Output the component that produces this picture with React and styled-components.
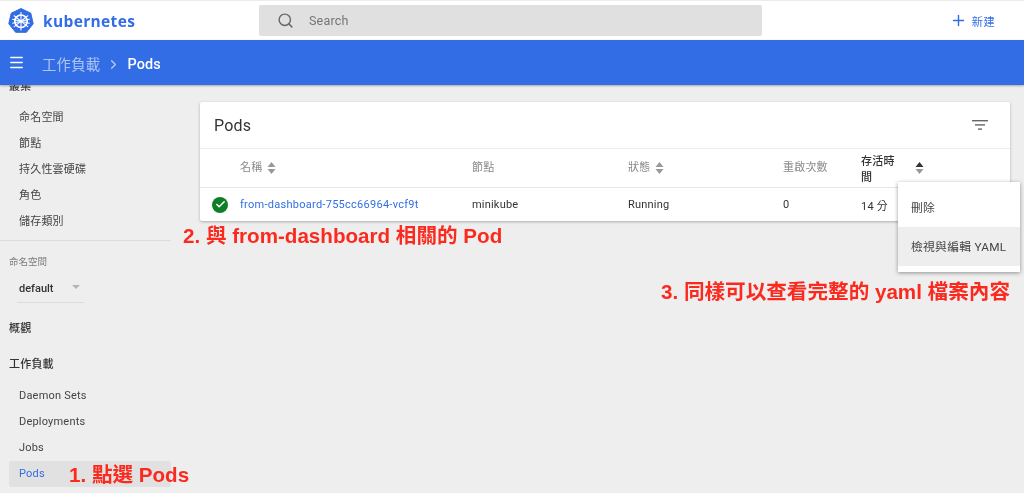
import React from "react";
import styled, { createGlobalStyle } from "styled-components";
import { Search, Plus, Menu, ChevronRight, Check } from "lucide-react";

const Global = createGlobalStyle`
  html, body { margin: 0; padding: 0; background: #eeeeee; }
  body { font-family: Roboto, "Noto Sans CJK TC", sans-serif; color: #333; -webkit-font-smoothing: antialiased; }
  * { box-sizing: border-box; }
`;

const Page = styled.div`
  position: relative;
  width: 1024px;
  height: 493px;
  overflow: hidden;
  background: #eeeeee;
  display: flex;
  flex-direction: column;
  filter: blur(0.3px);
`;

const TopBar = styled.header`
  height: 40px;
  flex: none;
  background: #fff;
  border-top: 1px solid #ececec;
  display: flex;
  align-items: center;
`;

const Brand = styled.div`
  width: 259px;
  display: flex;
  align-items: center;
  gap: 9px;
  padding-left: 8px;
  color: #326de6;
  font: 700 15.5px "Open Sans", sans-serif;
  letter-spacing: 0.35px;
`;

const SearchBox = styled.div`
  width: 503px;
  height: 31px;
  background: #e0e0e0;
  border-radius: 2px;
  display: flex;
  align-items: center;
  gap: 15px;
  padding-left: 18px;
  color: #757575;
  font-size: 12.5px;
  letter-spacing: 0.2px;
`;

const NewButton = styled.div`
  margin-left: auto;
  margin-right: 29px;
  display: flex;
  align-items: center;
  gap: 5px;
  color: #326de6;
  font-size: 11.2px;
  letter-spacing: 0.4px;
`;

const BlueBar = styled.div`
  height: 45px;
  flex: none;
  background: #326de6;
  box-shadow: 0 1px 2px rgba(0, 0, 0, 0.3);
  display: flex;
  align-items: center;
  padding-left: 8px;
  color: #fff;
  position: relative;
  z-index: 2;
`;

const Crumb = styled.span`
  font-size: 14.4px;
  font-weight: ${(p) => (p.$current ? 500 : 400)};
  color: ${(p) => (p.$current ? "#fff" : "rgba(255,255,255,0.6)")};
  letter-spacing: 0.2px;
  padding-top: ${(p) => (p.$current ? 3 : 1)}px;
`;

const CrumbSep = styled.span`
  display: flex;
  margin: 3px 6px 0 6px;
  color: rgba(255, 255, 255, 0.65);
`;

const Body = styled.div`
  flex: 1;
  display: flex;
  min-height: 0;
`;

const Sidebar = styled.nav`
  width: 171px;
  flex: none;
  font-size: 11px;
  overflow: hidden;
`;

const SectionTitle = styled.div`
  height: 26px;
  line-height: 26px;
  padding-left: 9px;
  color: #333;
  font-weight: 500;
  font-size: 11px;
  letter-spacing: 0.2px;
  margin-top: ${(p) => p.$mt || 0}px;
`;

const Item = styled.div`
  height: 26px;
  line-height: 26px;
  margin-left: 9px;
  padding-left: 10px;
  border-radius: 2px;
  font-size: 11px;
  letter-spacing: 0.2px;
  color: ${(p) => (p.$active ? "#326de6" : "#444")};
  background: ${(p) => (p.$active ? "#e1e1e1" : "transparent")};
`;

const Spacer = styled.div`
  height: ${(p) => p.$h}px;
`;

const Divider = styled.div`
  height: 1px;
  background: #dcdcdc;
  margin-top: 5px;
`;

const NsLabel = styled.div`
  margin: 15px 0 0 9px;
  height: 12px;
  line-height: 12px;
  font-size: 9.5px;
  color: #7d7d7d;
`;

const NsSelect = styled.div`
  margin: 10px 0 0 17px;
  width: 67px;
  height: 25px;
  border-bottom: 1px solid #dcdcdc;
  padding-left: 2px;
  padding-top: 3px;
  display: flex;
  justify-content: space-between;
  align-items: flex-start;
  padding-right: 4px;
  font-size: 11px;
  font-weight: 500;
  color: #333;
  line-height: 16px;
`;

const Caret = styled.span`
  margin-top: 4px;
  border-left: 4px solid transparent;
  border-right: 4px solid transparent;
  border-top: 4px solid #b5b5b5;
`;

const Main = styled.main`
  flex: 1;
  padding: 17px 14px 0 29px;
`;

const Card = styled.section`
  background: #fff;
  border-radius: 2px;
  box-shadow: 0 1px 3px rgba(0, 0, 0, 0.28);
`;

const CardHead = styled.div`
  height: 47px;
  display: flex;
  align-items: center;
  justify-content: space-between;
  padding: 0 22px 0 14px;
  border-bottom: 1px solid #ececec;
  font-size: 16px;
  color: #333;
  letter-spacing: 0.2px;
`;

const Grid = styled.div`
  display: grid;
  grid-template-columns: 40px 232px 156px 155px 78px 1fr;
  align-items: center;
  height: ${(p) => p.$h}px;
  font-size: 11px;
  letter-spacing: 0.2px;
  color: #333;
  border-bottom: ${(p) => (p.$line ? "1px solid #e6e6e6" : "none")};
`;

const HeadCell = styled.div`
  color: ${(p) => (p.$dark ? "#333" : "#8a8a8a")};
  font-weight: ${(p) => (p.$dark ? 500 : 400)};
  display: flex;
  align-items: center;
  gap: 5px;
  line-height: 16px;
  margin-top: ${(p) => (p.$dark ? 3 : 0)}px;
`;

const TimeLabel = styled.span`
  width: 44px;
`;

const SortSlot = styled.span`
  display: flex;
  margin-left: 5px;
  margin-top: -4px;
`;

const LinkCell = styled.div`
  color: #326de6;
  letter-spacing: 0.27px;
`;

const StatusCell = styled.div`
  display: flex;
  justify-content: flex-start;
  padding-left: 12px;
`;

const StatusDot = styled.span`
  width: 16px;
  height: 16px;
  border-radius: 50%;
  background: #0f7f27;
  color: #fff;
  display: flex;
  align-items: center;
  justify-content: center;
`;

const PopMenu = styled.div`
  position: absolute;
  left: 898px;
  top: 182px;
  width: 122px;
  height: 90px;
  background: #fff;
  box-shadow: 0 1px 4px rgba(0, 0, 0, 0.4);
  padding-top: 6px;
  z-index: 3;
`;

const MenuEntry = styled.div`
  height: 39px;
  line-height: 40px;
  padding-left: 13px;
  font-size: 11.8px;
  letter-spacing: 0.25px;
  color: #444;
  background: ${(p) => (p.$hover ? "#eeeeee" : "transparent")};
`;

const Note = styled.div`
  position: absolute;
  left: ${(p) => p.$x}px;
  top: ${(p) => p.$y}px;
  color: #fb2a1e;
  font: 700 20.6px/24px "Liberation Sans", "Noto Sans CJK TC", sans-serif;
  white-space: nowrap;
  z-index: 4;
`;

const Logo = () => (
  <svg width="26" height="26" viewBox="0 0 26 26">
    <path d="M13 .5 22.8 5.2 25.2 15.8 18.4 24.3H7.6L.8 15.8 3.2 5.2Z" fill="#326de6" stroke="#326de6" strokeLinejoin="round" />
    <circle cx="13" cy="13.2" r="6.2" fill="none" stroke="#fff" strokeWidth="1.7" />
    <circle cx="13" cy="13.2" r="1.5" fill="#fff" />
    <g stroke="#fff" strokeWidth="1.1" strokeLinecap="round">
      <path d="M13 4.5V22" />
      <path d="M6.2 7.8 19.8 18.6" />
      <path d="M19.8 7.8 6.2 18.6" />
      <path d="M4.6 15.2 21.4 11.3" />
      <path d="M21.4 15.2 4.6 11.3" />
    </g>
  </svg>
);

const Sort = ({ active }) => (
  <svg width="9" height="14" viewBox="0 0 9 14">
    <path d="M4.5 1 8.5 6H.5Z" fill={active ? "#333" : "#999"} />
    <path d="M4.5 13 8.5 8H.5Z" fill="#999" />
  </svg>
);

const FilterIcon = () => (
  <svg width="16" height="12" viewBox="0 0 16 12" fill="#666">
    <rect x="0" y="1" width="16" height="1.4" />
    <rect x="3" y="5.2" width="10" height="1.4" />
    <rect x="6" y="9.4" width="4" height="1.4" />
  </svg>
);

const MenuIcon = styled(Menu)`
  margin-right: 17px;
`;

export default function App() {
  return (
    <Page>
      <Global />
      <TopBar>
        <Brand>
          <Logo />
          <span>kubernetes</span>
        </Brand>
        <SearchBox>
          <Search size={17} strokeWidth={2} color="#666" />
          <span>Search</span>
        </SearchBox>
        <NewButton>
          <Plus size={17} strokeWidth={2} />
          <span>新建</span>
        </NewButton>
      </TopBar>
      <BlueBar>
        <MenuIcon size={17} strokeWidth={2.2} />
        <Crumb>工作負載</Crumb>
        <CrumbSep><ChevronRight size={15} strokeWidth={2} /></CrumbSep>
        <Crumb $current>Pods</Crumb>
      </BlueBar>
      <Body>
        <Sidebar>
          <SectionTitle $mt={-11}>叢集</SectionTitle>
          <Spacer $h={5} />
          <Item>命名空間</Item>
          <Item>節點</Item>
          <Item>持久性雲硬碟</Item>
          <Item>角色</Item>
          <Item>儲存類別</Item>
          <Divider />
          <NsLabel>命名空間</NsLabel>
          <NsSelect>
            <span>default</span>
            <Caret />
          </NsSelect>
          <SectionTitle $mt={13}>概觀</SectionTitle>
          <SectionTitle $mt={10}>工作負載</SectionTitle>
          <Spacer $h={5} />
          <Item>Daemon Sets</Item>
          <Item>Deployments</Item>
          <Item>Jobs</Item>
          <Item $active>Pods</Item>
        </Sidebar>
        <Main>
          <Card>
            <CardHead>
              <span>Pods</span>
              <FilterIcon />
            </CardHead>
            <Grid $h={39} $line>
              <div />
              <HeadCell>名稱 <Sort /></HeadCell>
              <HeadCell>節點</HeadCell>
              <HeadCell>狀態 <Sort /></HeadCell>
              <HeadCell>重啟次數</HeadCell>
              <HeadCell $dark>
                <TimeLabel>存活時間</TimeLabel>
                <SortSlot><Sort active /></SortSlot>
              </HeadCell>
            </Grid>
            <Grid $h={33}>
              <StatusCell>
                <StatusDot><Check size={11} strokeWidth={3.4} /></StatusDot>
              </StatusCell>
              <LinkCell>from-dashboard-755cc66964-vcf9t</LinkCell>
              <div>minikube</div>
              <div>Running</div>
              <div>0</div>
              <div>14 分</div>
            </Grid>
          </Card>
        </Main>
      </Body>
      <PopMenu>
        <MenuEntry>刪除</MenuEntry>
        <MenuEntry $hover>檢視與編輯 YAML</MenuEntry>
      </PopMenu>
      <Note $x={69} $y={463}>1. 點選 Pods</Note>
      <Note $x={183} $y={224}>2. 與 from-dashboard 相關的 Pod</Note>
      <Note $x={661} $y={280}>3. 同樣可以查看完整的 yaml 檔案內容</Note>
    </Page>
  );
}
